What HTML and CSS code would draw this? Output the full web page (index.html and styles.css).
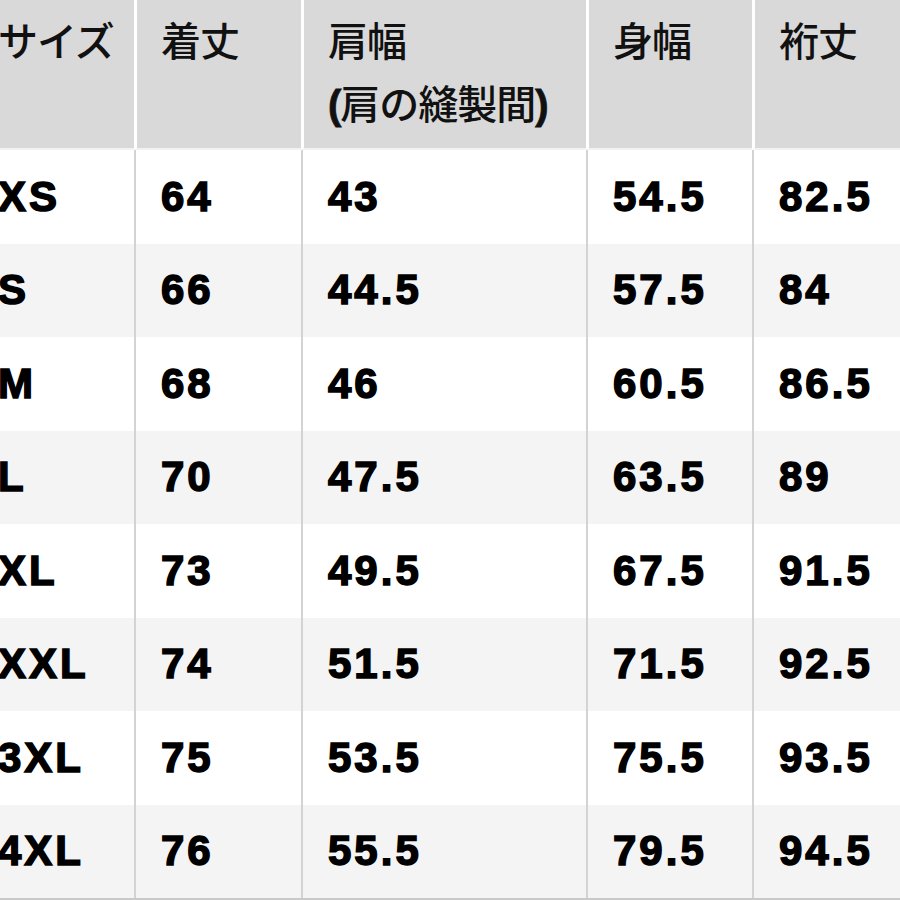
FILE: index.html
```html
<!DOCTYPE html>
<html lang="ja">
<head>
<meta charset="utf-8">
<title>サイズ表</title>
<link rel="stylesheet" href="styles.css">
</head>
<body>
<div class="sheet">
  <div class="grid">
    <div class="h first">サイズ</div>
    <div class="h">着丈</div>
    <div class="h">肩幅<br><span class="p">(</span>肩の縫製間<span class="p">)</span></div>
    <div class="h">身幅</div>
    <div class="h">裄丈</div>

    <div class="c first">XS</div><div class="c">64</div><div class="c">43</div><div class="c">54.5</div><div class="c">82.5</div>
    <div class="c first alt">S</div><div class="c alt">66</div><div class="c alt">44.5</div><div class="c alt">57.5</div><div class="c alt">84</div>
    <div class="c first">M</div><div class="c">68</div><div class="c">46</div><div class="c">60.5</div><div class="c">86.5</div>
    <div class="c first alt">L</div><div class="c alt">70</div><div class="c alt">47.5</div><div class="c alt">63.5</div><div class="c alt">89</div>
    <div class="c first">XL</div><div class="c">73</div><div class="c">49.5</div><div class="c">67.5</div><div class="c">91.5</div>
    <div class="c first alt">XXL</div><div class="c alt">74</div><div class="c alt">51.5</div><div class="c alt">71.5</div><div class="c alt">92.5</div>
    <div class="c first">3XL</div><div class="c">75</div><div class="c">53.5</div><div class="c">75.5</div><div class="c">93.5</div>
    <div class="c first alt">4XL</div><div class="c alt">76</div><div class="c alt">55.5</div><div class="c alt">79.5</div><div class="c alt">94.5</div>
  </div>
</div>
</body>
</html>
```

FILE: styles.css
```css
html, body {
  margin: 0;
  padding: 0;
  background: #ffffff;
  overflow: hidden;
}

.sheet {
  width: 900px;
  height: 900px;
  overflow: hidden;
}

.grid {
  margin-left: -26px;
  width: 1000px;
  display: grid;
  grid-template-columns: 160px 167px 285px 166px 220px;
  grid-template-rows: 150px repeat(8, 93.5px);
  border-bottom: 2px solid #c9c9c9;
}

.h {
  background: #d9d9d9;
  border-left: 3px solid #ffffff;
  border-bottom: 2px solid #f2f2f2;
  padding: 11px 0 0 24px;
  font-family: "Liberation Sans", "Noto Sans CJK JP", sans-serif;
  font-size: 40px;
  line-height: 63px;
  font-weight: 500;
  color: #111111;
  letter-spacing: -1px;
}

.h .p {
  font-weight: 700;
  -webkit-text-stroke: 0.8px #111;
}

.c {
  background: #ffffff;
  border-left: 2px solid #d3d3d3;
  padding-left: 25px;
  display: flex;
  align-items: center;
  font-family: "Liberation Sans", Arial, sans-serif;
  font-weight: 700;
  font-size: 42px;
  letter-spacing: 3px;
  -webkit-text-stroke: 1.5px #000;
  color: #000000;
}

.c.alt {
  background: #f4f4f4;
}

.first {
  border-left: none;
  padding-left: 24px;
}
```
